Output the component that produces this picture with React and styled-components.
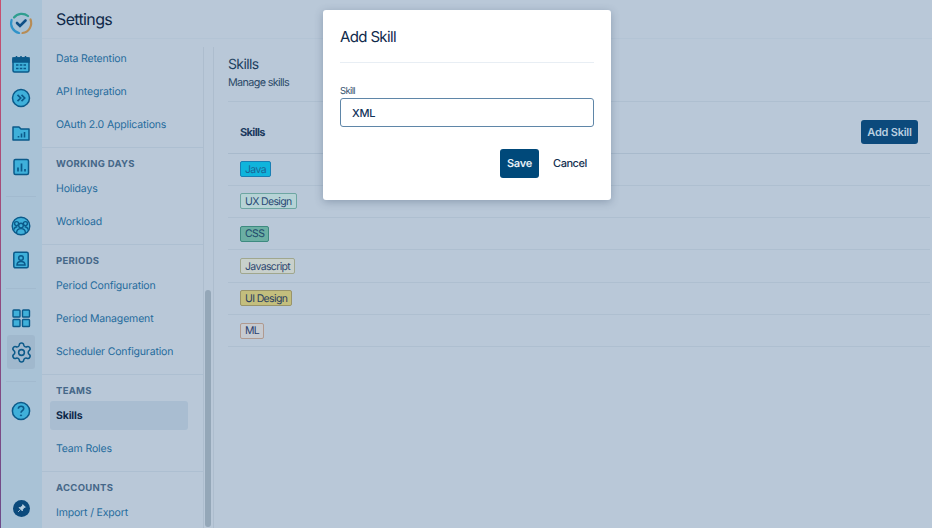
import React from 'react'
import styled, { createGlobalStyle } from 'styled-components'
import { Settings } from 'lucide-react'

const GlobalStyle = createGlobalStyle`
    html, body { margin: 0; padding: 0; height: 100%; overflow: hidden; }
    body {
        font-family: Inter, "Noto Sans", sans-serif;
        text-rendering: geometricPrecision;
        letter-spacing: -0.04em;
        background: #b9c8d8;
        color: #0f2a4c;
    }
    button, input {
        font-family: inherit;
        letter-spacing: -0.02em;
        text-rendering: inherit;
    }
`

const Page = styled.div`
    position: relative;
    display: flex;
    width: 932px;
    height: 528px;
    overflow: hidden;
    background: #b9c8d8;
`

const Rail = styled.nav`
    flex: 0 0 42px;
    box-sizing: border-box;
    display: flex;
    flex-direction: column;
    align-items: center;
    height: 528px;
    padding: 6px 1px 2px 0;
    background: #a9c2d6;
    border-left: 1px solid transparent;
    border-image: linear-gradient(180deg, #c9506f 0%, #8d4a80 60%, #6d4b8a 100%) 1;
`

const RailSlot = styled.div`
    flex: 0 0 34.3px;
    width: 28px;
    display: flex;
    align-items: center;
    justify-content: center;
    border-radius: 3px;
    background: ${p => (p.$active ? '#a0b8cd' : 'transparent')};
`

const RailDivider = styled.div`
    flex: 0 0 1px;
    width: 30px;
    margin: ${p => p.$margin};
    background: ${p => (p.$hidden ? 'transparent' : '#a2bacf')};
`

const RailSpacer = styled.div`
    flex: 1;
`

const Main = styled.div`
    flex: 1;
    display: flex;
    flex-direction: column;
    min-width: 0;
`

const Header = styled.header`
    flex: 0 0 38px;
    display: flex;
    align-items: center;
    padding-left: 14px;
    font-size: 16px;
    color: #0e2849;
    border-bottom: 1px solid #b3c4d5;
`

const Body = styled.div`
    flex: 1;
    display: flex;
    min-height: 0;
`

const SideMenu = styled.aside`
    flex: 0 0 161px;
    overflow: hidden;
`

const ScrollTrack = styled.div`
    position: relative;
    flex: 0 0 11px;
    margin-top: 8px;
    border-left: 1px solid #adbdce;
    border-right: 1px solid #adbdce;
    box-sizing: border-box;
`

const ScrollThumb = styled.div`
    position: absolute;
    left: 1px;
    top: 243px;
    width: 6px;
    height: 237px;
    border-radius: 3px;
    background: #94a7b8;
`

const MenuSection = styled.section`
    padding: 8px 15px 8px 8px;
    border-bottom: ${p => (p.$last ? 'none' : '1px solid #adbfd1')};
    &:first-child { padding-top: 5px; }
`

const SectionTitle = styled.h4`
    margin: 1px 0 1px;
    padding-left: 6px;
    height: 16px;
    line-height: 16px;
    font-size: 9.5px;
    font-weight: 700;
    letter-spacing: 0.3px;
    color: #456788;
`

const MenuItem = styled.a`
    box-sizing: border-box;
    display: flex;
    align-items: center;
    height: 29px;
    margin-bottom: ${p => (p.$end ? '0' : '4px')};
    padding: 0 0 1px 6px;
    border-radius: 3px;
    font-size: 10.5px;
    letter-spacing: -0.015em;
    font-weight: ${p => (p.$active ? 700 : 400)};
    color: ${p => (p.$active ? '#0e2849' : '#266c9d')};
    background: ${p => (p.$active ? '#a9bdd1' : 'transparent')};
`

const Content = styled.main`
    flex: 1;
    padding: 17px 2px 0 14px;
`

const ContentHead = styled.div`
    height: 45px;
    border-bottom: 1px solid #aebfd0;
`

const ContentTitle = styled.h2`
    margin: 0;
    line-height: 17px;
    font-size: 14px;
    font-weight: 400;
    color: #20405f;
`

const ContentSub = styled.p`
    margin: 3px 0 0;
    line-height: 14px;
    font-size: 10.8px;
    color: #2c4a68;
`

const TableHead = styled.div`
    box-sizing: border-box;
    display: flex;
    align-items: center;
    justify-content: space-between;
    height: 51.5px;
    padding: 10px 12px 0;
    border-bottom: 1px solid #a8bacc;
    font-size: 11px;
    font-weight: 700;
    color: #1b3a5e;
`

const AddButton = styled.button`
    height: 24px;
    width: 57px;
    padding: 0;
    border: none;
    border-radius: 3px;
    background: #0c4a7c;
    color: #b9cfe0;
    font-size: 11px;
    font-weight: 600;
`

const SkillRow = styled.div`
    box-sizing: border-box;
    display: flex;
    align-items: center;
    height: 32.3px;
    padding-left: 12px;
    border-bottom: 1px solid #aebfd0;
`

const Tag = styled.span`
    box-sizing: border-box;
    display: inline-flex;
    align-items: center;
    height: 16px;
    padding: 0 4px;
    border: 1px solid ${p => p.$border};
    border-radius: 2px;
    background: ${p => p.$bg};
    color: ${p => p.$color};
    font-size: 10.5px;
`

const Modal = styled.div`
    position: absolute;
    left: 323px;
    top: 10px;
    box-sizing: border-box;
    width: 288px;
    height: 190px;
    padding: 0 17px;
    background: #fff;
    border-radius: 3px;
    box-shadow: 0 2px 8px rgba(40, 60, 90, 0.3);
`

const ModalTitle = styled.h3`
    margin: 0;
    height: 53px;
    line-height: 53px;
    box-sizing: border-box;
    border-bottom: 1px solid #e8eef4;
    font-size: 15px;
    font-weight: 400;
    color: #0f2a4c;
`

const FieldLabel = styled.label`
    display: block;
    margin-top: 22px;
    line-height: 13px;
    font-size: 9.5px;
    color: #34526f;
`

const FieldInput = styled.input`
    display: block;
    box-sizing: border-box;
    width: 254px;
    height: 29px;
    padding: 0 11px;
    border: 1px solid #5f86a8;
    border-radius: 3px;
    outline: none;
    font-size: 11px;
    font-weight: 500;
    color: #12335a;
`

const ModalActions = styled.div`
    display: flex;
    justify-content: flex-end;
    align-items: center;
    margin-top: 22px;
    padding-right: 8px;
    gap: 14px;
`

const SaveButton = styled.button`
    width: 39px;
    height: 29px;
    padding: 0 0 2px;
    border: none;
    border-radius: 3px;
    background: #00497a;
    color: #e6eff6;
    font-size: 11px;
    font-weight: 600;
`

const CancelButton = styled.button`
    width: 33px;
    padding: 0 0 2px;
    border: none;
    background: none;
    color: #12304f;
    font-size: 11px;
    font-weight: 500;
    letter-spacing: -0.04em;
    white-space: nowrap;
`

const ink = '#0b5a8a'
const fill = '#3fb0da'

const Logo = () => (
    <svg width="26" height="26" viewBox="0 0 26 26" fill="none" strokeWidth="2.2" strokeLinecap="round">
        <path d="M6 7.5 A10 10 0 0 1 20 6" stroke="#2f9e8f" />
        <path d="M22.5 9.5 A10 10 0 0 1 14.5 23" stroke="#b78c55" />
        <path d="M11 23 A10 10 0 0 1 3.6 10" stroke="#2f93c9" />
        <path d="M9 13 L12 16 L17.5 10.5" stroke="#0f4f86" strokeWidth="2.6" />
    </svg>
)

const Calendar = () => (
    <svg width="20" height="20" viewBox="0 0 20 20" fill={fill} stroke={ink} strokeWidth="1.5">
        <rect x="2" y="4" width="16" height="14" rx="1.5" />
        <path d="M2 4h16v4H2z" fill={ink} />
        <path d="M5.5 2v3M10 2v3M14.5 2v3" />
        <path d="M5 11h2.5M8.8 11h2.5M12.5 11h2.5M5 14.5h2.5M8.8 14.5h2.5M12.5 14.5h2.5" strokeWidth="1.4" stroke="#0b5a8a" />
    </svg>
)

const Chevrons = () => (
    <svg width="20" height="20" viewBox="0 0 20 20" fill={fill} stroke={ink} strokeWidth="1.5">
        <circle cx="10" cy="10" r="8.5" />
        <path d="M6.5 6.8 L9.7 10 L6.5 13.2M10.5 6.8 L13.7 10 L10.5 13.2" fill="none" strokeWidth="1.7" />
    </svg>
)

const Folder = () => (
    <svg width="20" height="20" viewBox="0 0 20 20" fill={fill} stroke={ink} strokeWidth="1.5">
        <path d="M2 4 H8 L10 6 H18 V17 H2 Z" strokeLinejoin="round" />
        <path d="M7.5 14.5v-1.5M10.5 14.5v-4M13.5 14.5v-5.5" strokeWidth="1.6" />
    </svg>
)

const Chart = () => (
    <svg width="20" height="20" viewBox="0 0 20 20" fill={fill} stroke={ink} strokeWidth="1.5">
        <rect x="3" y="2.5" width="14.5" height="15" rx="1.5" />
        <path d="M7 14.5v-4M10.5 14.5v-8M14 14.5v-2.5" strokeWidth="1.7" />
    </svg>
)

const Team = () => (
    <svg width="20" height="20" viewBox="0 0 20 20" fill={fill} stroke={ink} strokeWidth="1.4">
        <circle cx="10" cy="10" r="8.8" />
        <circle cx="5.6" cy="7.6" r="2" />
        <circle cx="14.4" cy="7.6" r="2" />
        <circle cx="10" cy="9.6" r="2.3" />
        <path d="M3 13.5c.5-2 2-2.7 3.4-2.7M17 13.5c-.5-2-2-2.7-3.4-2.7" fill="none" />
        <path d="M5.6 17c0-3 2-4.4 4.4-4.4s4.4 1.4 4.4 4.4" />
    </svg>
)

const Contact = () => (
    <svg width="20" height="20" viewBox="0 0 20 20" fill={fill} stroke={ink} strokeWidth="1.5">
        <rect x="2.8" y="2.2" width="14.4" height="15.6" rx="1.5" />
        <circle cx="10" cy="8" r="2.3" fill="none" />
        <path d="M6 15c0-2.6 1.8-3.6 4-3.6s4 1 4 3.6z" fill="none" />
    </svg>
)

const Grid = () => (
    <svg width="20" height="20" viewBox="0 0 20 20" fill={fill} stroke={ink} strokeWidth="1.4">
        <rect x="2" y="2" width="7" height="7" rx="0.8" />
        <rect x="11.5" y="2" width="7" height="7" rx="0.8" />
        <rect x="2" y="11.5" width="7" height="7" rx="0.8" />
        <rect x="11.5" y="11.5" width="7" height="7" rx="0.8" />
    </svg>
)

const Help = () => (
    <svg width="20" height="20" viewBox="0 0 20 20" fill={fill} stroke={ink} strokeWidth="1.5">
        <circle cx="10" cy="10" r="8.6" />
        <path d="M7.4 7.8c0-1.6 1.2-2.6 2.7-2.6s2.6 1 2.6 2.3c0 2.2-2.7 2-2.7 4.3" fill="none" strokeWidth="1.6" />
        <circle cx="10" cy="14.4" r="0.6" fill={ink} strokeWidth="0.9" />
    </svg>
)

const Pin = () => (
    <svg width="17" height="17" viewBox="0 0 17 17">
        <circle cx="8.5" cy="8.5" r="8.5" fill="#0c4a7c" />
        <path d="M9.8 4.6 L12.4 7.2 L11 7.6 L9.6 9.6 L9.4 11 L6 7.6 L7.4 7.4 L9.4 6 Z M7.2 9.8 L5 12" fill="#b9cfe0" stroke="#b9cfe0" strokeWidth="0.8" />
    </svg>
)

const sections = [
    { items: ['Data Retention', 'API Integration', 'OAuth 2.0 Applications'] },
    { title: 'WORKING DAYS', items: ['Holidays', 'Workload'] },
    { title: 'PERIODS', items: ['Period Configuration', 'Period Management', 'Scheduler Configuration'] },
    { title: 'TEAMS', items: ['Skills', 'Team Roles'] },
    { title: 'ACCOUNTS', items: ['Import / Export'], last: true },
]

const skills = [
    { name: 'Java', bg: '#0fb4dc', border: '#1a7fb4', color: '#1c6594' },
    { name: 'UX Design', bg: '#b6d3d6', border: '#6da6a2', color: '#2a4a75' },
    { name: 'CSS', bg: '#6bafa3', border: '#3d8a80', color: '#1f4a6c' },
    { name: 'Javascript', bg: '#c8d0cc', border: '#a0a78e', color: '#2e4872' },
    { name: 'UI Design', bg: '#c3be7d', border: '#99946a', color: '#2a4060' },
    { name: 'ML', bg: '#c6cad0', border: '#b09a90', color: '#2a3f70' },
]

export default function App() {
    return <Page>
        <GlobalStyle />
        <Rail>
            <RailSlot><Logo /></RailSlot>
            <RailDivider $hidden $margin="5.6px 0 0" />
            <RailSlot><Calendar /></RailSlot>
            <RailSlot><Chevrons /></RailSlot>
            <RailSlot><Folder /></RailSlot>
            <RailSlot><Chart /></RailSlot>
            <RailDivider $margin="12.4px 0 11px" />
            <RailSlot><Team /></RailSlot>
            <RailSlot><Contact /></RailSlot>
            <RailDivider $margin="11px 0 11.5px" />
            <RailSlot><Grid /></RailSlot>
            <RailSlot $active><Settings size={23} color={ink} strokeWidth={1.6} /></RailSlot>
            <RailDivider $margin="12px 0 12px" />
            <RailSlot><Help /></RailSlot>
            <RailSpacer />
            <RailSlot><Pin /></RailSlot>
        </Rail>
        <Main>
            <Header>Settings</Header>
            <Body>
                <SideMenu>
                    {sections.map((section, idx) => <MenuSection key={idx} $last={section.last}>
                        {section.title && <SectionTitle>{section.title}</SectionTitle>}
                        {section.items.map((item, i) => <MenuItem
                            key={item}
                            $active={item === 'Skills'}
                            $end={i === section.items.length - 1}
                        >{item}</MenuItem>)}
                    </MenuSection>)}
                </SideMenu>
                <ScrollTrack><ScrollThumb /></ScrollTrack>
                <Content>
                    <ContentHead>
                        <ContentTitle>Skills</ContentTitle>
                        <ContentSub>Manage skills</ContentSub>
                    </ContentHead>
                    <TableHead>
                        Skills
                        <AddButton>Add Skill</AddButton>
                    </TableHead>
                    {skills.map(skill => <SkillRow key={skill.name}>
                        <Tag $bg={skill.bg} $border={skill.border} $color={skill.color}>{skill.name}</Tag>
                    </SkillRow>)}
                </Content>
            </Body>
        </Main>
        <Modal>
            <ModalTitle>Add Skill</ModalTitle>
            <FieldLabel>Skill</FieldLabel>
            <FieldInput defaultValue="XML" />
            <ModalActions>
                <SaveButton>Save</SaveButton>
                <CancelButton>Cancel</CancelButton>
            </ModalActions>
        </Modal>
    </Page>
}
